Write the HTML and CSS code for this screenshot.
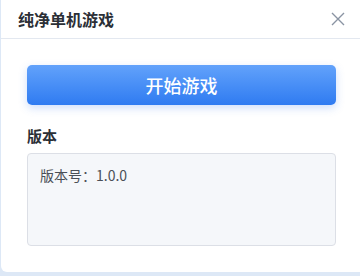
FILE: index.html
```html
<!DOCTYPE html>
<html lang="zh">
<head>
<meta charset="utf-8">
<link rel="stylesheet" href="styles.css">
</head>
<body>
<div class="card">
  <div class="header">
    <span class="title">纯净单机游戏</span>
    <svg class="close" width="14" height="14" viewBox="0 0 14 14"><path d="M1 1L13 13M13 1L1 13" stroke="#8a94a3" stroke-width="1.4" fill="none"/></svg>
  </div>
  <div class="content">
    <button class="start">开始游戏</button>
    <div class="label">版本</div>
    <div class="box">版本号：1.0.0</div>
  </div>
</div>
</body>
</html>
```
FILE: styles.css
```css
html, body {
  margin: 0;
  padding: 0;
  background: #dde8f6;
  font-family: "Noto Sans CJK SC", "Noto Sans", sans-serif;
}
.card {
  margin-left: 1px;
  width: 359px;
  height: 272px;
  background: #ffffff;
  border-radius: 0 0 0 6px;
  box-sizing: border-box;
}
.header {
  height: 39px;
  box-sizing: border-box;
  border-bottom: 1px solid #e3e8f0;
  display: flex;
  align-items: center;
  justify-content: space-between;
  padding: 0 15px 0 17px;
}
.title {
  font-size: 16px;
  font-weight: 700;
  color: #2b2f36;
  line-height: 20px;
  margin-top: -1px;
}
.close {
  display: block;
}
.content {
  padding: 26px 24px 0 26px;
  display: flex;
  flex-direction: column;
}
.start {
  height: 40px;
  border: none;
  border-radius: 5px;
  background: linear-gradient(180deg, #62a2fb 0%, #2f7bf1 100%);
  box-shadow: 0 3px 8px rgba(60, 125, 240, 0.25);
  color: #ffffff;
  font-family: inherit;
  font-size: 18px;
  font-weight: 500;
  padding: 0;
  margin: 0;
}
.label {
  margin-top: 21px;
  font-size: 15px;
  font-weight: 700;
  color: #2b2f36;
  line-height: 20px;
}
.box {
  margin-top: 7px;
  height: 93px;
  box-sizing: border-box;
  border: 1px solid #dcdfe6;
  border-radius: 4px;
  background: #f5f7fa;
  padding: 11px 12px;
  font-size: 14px;
  line-height: 20px;
  color: #4a4f57;
}
```
